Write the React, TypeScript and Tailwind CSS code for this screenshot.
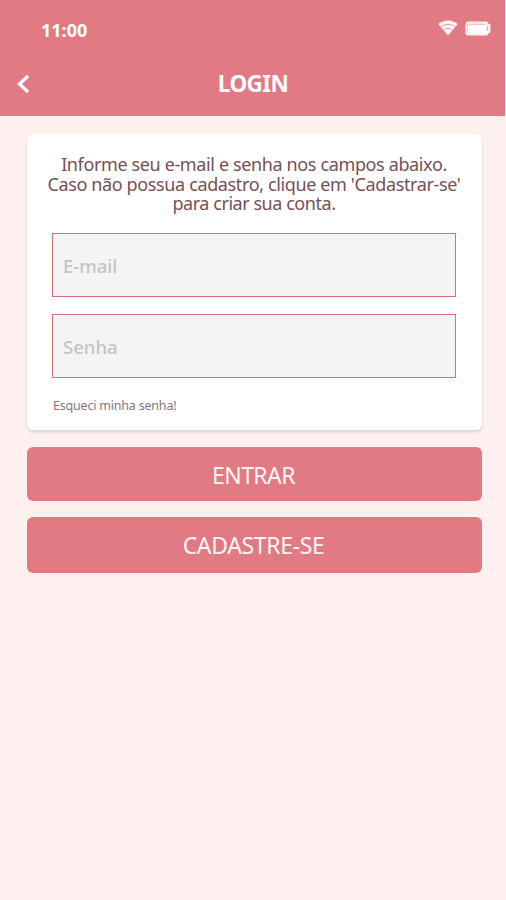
import React, { useState } from 'react';

interface FieldProps {
  label: string;
  type: 'email' | 'password';
  value: string;
  onChange: (value: string) => void;
}

const WifiIcon: React.FC = () => (
  <svg width="20" height="16" viewBox="0 0 20 16" fill="none" aria-hidden="true">
    <path d="M10 15.4 0.3 4.1C3 1.6 6.4 0.4 10 0.4s7 1.2 9.7 3.7Z" fill="#fffafa" />
    <path d="M2.9 6.9C5 5.1 7.4 4.3 10 4.3s5 .8 7.1 2.6M5.6 9.9C6.9 8.9 8.4 8.4 10 8.4s3.1.5 4.4 1.5" stroke="#e99aa1" strokeWidth="1" />
  </svg>
);

const BatteryIcon: React.FC = () => (
  <svg width="26" height="15" viewBox="0 0 26 15" fill="none" aria-hidden="true">
    <rect x="0.5" y="0.5" width="23" height="14" rx="2.5" fill="#fff1f0" />
    <path d="M23 3h1.1c.8 0 1.4.7 1.4 1.5v6c0 .8-.6 1.5-1.4 1.5H23Z" fill="#fff1f0" />
    <path d="M2.6 11.5V3.3h18.6" stroke="#eeb0b0" strokeWidth="0.8" />
    <rect x="3.5" y="4" width="17.5" height="7.5" fill="#fff" />
    <path d="M22.5 5v4.5" stroke="#e8a58f" strokeWidth="1" />
  </svg>
);

const Field: React.FC<FieldProps> = ({ label, type, value, onChange }) => (
  <input
    type={type}
    value={value}
    placeholder={label}
    aria-label={label}
    onChange={(e) => onChange(e.target.value)}
    className="block h-16 w-full border border-[#d5717c] bg-[#f4f4f4] px-2.5 text-[18.5px] font-medium text-[#765055] placeholder:text-[#c3c5c4] focus:outline-none"
  />
);

const App: React.FC = () => {
  const [email, setEmail] = useState('');
  const [password, setPassword] = useState('');

  return (
    <div className="h-[900px] w-[506px] overflow-hidden bg-[#fff0f0] font-['Noto_Sans','Open_Sans',sans-serif]">
      <header className="mr-px h-[116px] bg-[#e27a83] text-white">
        {/* Status bar */}
        <div className="flex h-[58px] items-center justify-between pl-[41px] pr-3.5">
          <span className="pt-0.5 text-[18px] font-bold">11:00</span>
          <div className="flex items-center gap-[7px] pb-0.5">
            <WifiIcon />
            <BatteryIcon />
          </div>
        </div>

        {/* Title */}
        <div className="grid h-[51px] grid-cols-[48px_1fr_48px] items-center">
          <button type="button" aria-label="Voltar" className="pl-[17px]">
            <svg width="13" height="20" viewBox="0 0 13 20" fill="none">
              <path d="M11 2 2.5 10l8.5 8" stroke="currentColor" strokeWidth="3.2" />
            </svg>
          </button>
          <h1 className="pt-px pl-px text-center text-[22.5px] font-bold tracking-[-0.6px]">LOGIN</h1>
        </div>
      </header>

      <main className="px-[27px] pt-[18px] pr-6">
        <section className="h-[296px] rounded-md bg-white px-[25px] pt-[21px] pr-[26px] shadow-[0_2px_3px_rgba(110,60,70,0.2)]">
          <div className="-mx-5 text-center text-[18px] leading-[19.7px] tracking-[-0.37px] text-[#765055]">
            <p>Informe seu e-mail e senha nos campos abaixo.</p>
            <p>Caso não possua cadastro, clique em &#39;Cadastrar-se&#39;</p>
            <p className="tracking-[-0.45px]">para criar sua conta.</p>
          </div>

          <div className="mt-[19px] flex flex-col gap-[17px]">
            <Field label="E-mail" type="email" value={email} onChange={setEmail} />
            <Field label="Senha" type="password" value={password} onChange={setPassword} />
          </div>

          <a href="#" className="mt-[18px] ml-px block text-[12.5px] leading-5 tracking-[-0.2px] text-[#85777b]">
            Esqueci minha senha!
          </a>
        </section>

        <div className="mt-[17px] flex flex-col gap-4 text-[23px] tracking-[-0.35px] text-[#fff5f5]">
          <button type="button" className="h-[54px] rounded-md bg-[#e27a83] pt-0.5 pr-0.5 tracking-[-0.6px]">ENTRAR</button>
          <button type="button" className="h-[56px] rounded-md bg-[#e27a83] pr-0.5">CADASTRE-SE</button>
        </div>
      </main>
    </div>
  );
};

export default App;
